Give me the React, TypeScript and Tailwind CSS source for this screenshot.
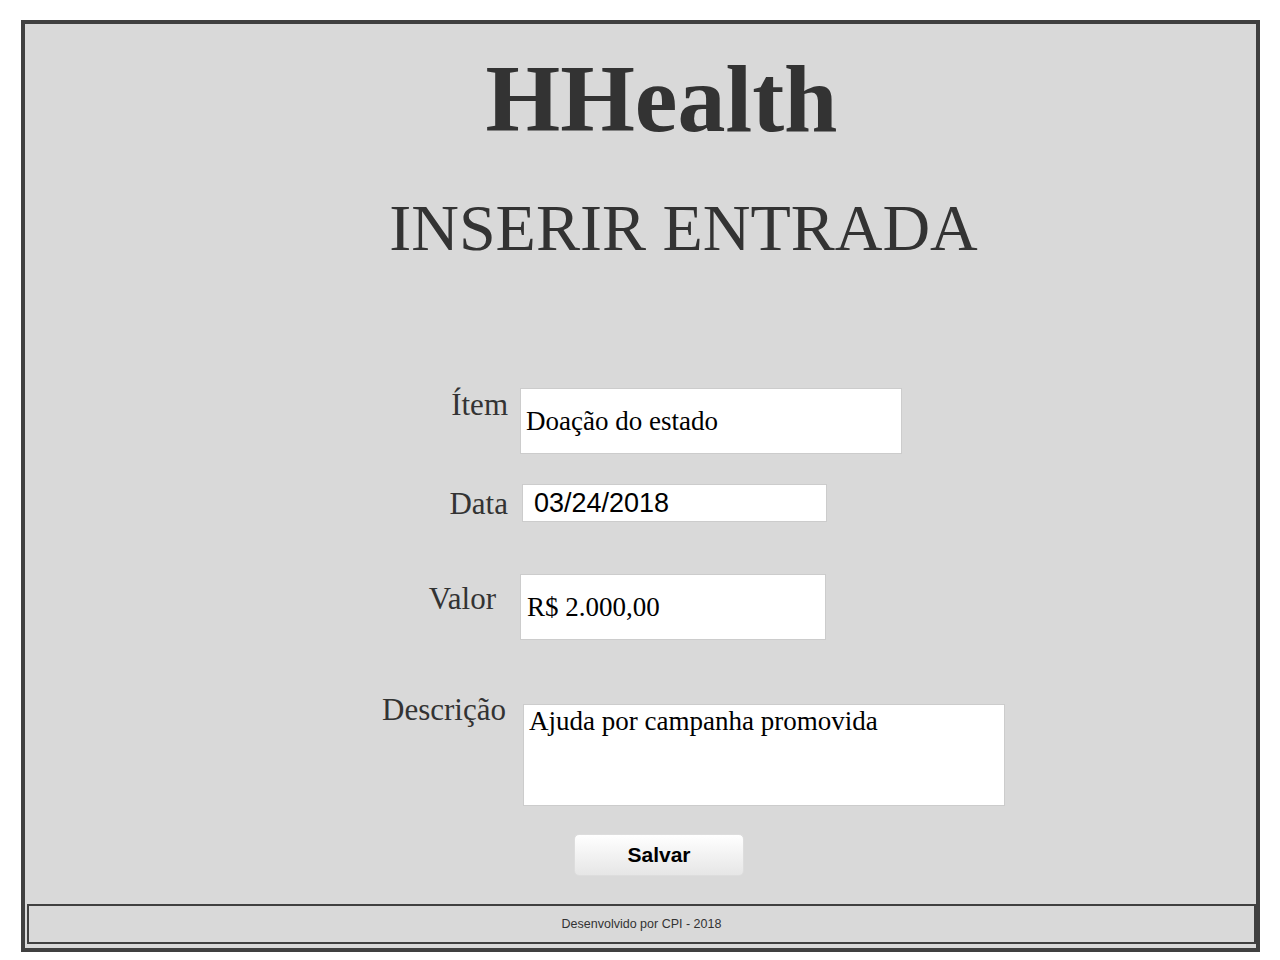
import { useState } from "react";

const serif = "font-['Liberation_Serif','Times_New_Roman',serif]";
const sans = "font-['Liberation_Sans',Arial,sans-serif]";

export default function App() {
  const [item, setItem] = useState("Doação do estado");
  const [data, setData] = useState("03/24/2018");
  const [valor, setValor] = useState("R$ 2.000,00");
  const [descricao, setDescricao] = useState("Ajuda por campanha promovida");

  return (
    <div className="min-h-screen bg-white pt-[20px] pl-[21px]">
      <div className="flex h-[932px] w-[1239px] flex-col border-4 border-[#404040] bg-[#d9d9d9]">
        {/* Header */}
        <h1 className={`${serif} mt-[27px] pl-[42px] text-center text-[96px] font-bold leading-none text-[#333333]`}>
          HHealth
        </h1>
        <h2 className={`${serif} mt-[48px] pl-[86px] text-center text-[66px] leading-none text-[#333333]`}>
          INSERIR ENTRADA
        </h2>

        {/* Form */}
        <div className="mt-[127px] flex items-start">
          <label className={`${serif} mt-[1px] w-[483px] text-right text-[31px] leading-none text-[#333333]`}>Ítem</label>
          <input
            value={item}
            onChange={(e) => setItem(e.target.value)}
            className={`${serif} ml-[12px] h-[66px] w-[382px] border border-[#cccccc] bg-white px-[5px] text-[27px] text-black outline-none`}
          />
        </div>

        <div className="mt-[30px] flex items-start">
          <label className={`${serif} mt-[4px] w-[483px] text-right text-[31px] leading-none text-[#333333]`}>Data</label>
          <input
            value={data}
            onChange={(e) => setData(e.target.value)}
            className={`${sans} ml-[14px] h-[38px] w-[305px] border border-[#cccccc] bg-white px-[11px] text-[27px] text-black outline-none`}
          />
        </div>

        <div className="mt-[52px] flex items-start">
          <label className={`${serif} mt-[9px] w-[483px] pr-[12px] text-right text-[31px] leading-none text-[#333333]`}>Valor</label>
          <input
            value={valor}
            onChange={(e) => setValor(e.target.value)}
            className={`${serif} ml-[12px] h-[66px] w-[306px] border border-[#cccccc] bg-white px-[6px] text-[27px] text-black outline-none`}
          />
        </div>

        <div className="mt-[52px] flex items-start">
          <label className={`${serif} mt-[2px] w-[483px] pr-[2px] text-right text-[31px] leading-none text-[#333333]`}>Descrição</label>
          <textarea
            value={descricao}
            onChange={(e) => setDescricao(e.target.value)}
            className={`${serif} ml-[15px] mt-[12px] h-[102px] w-[482px] resize-none border border-[#cccccc] bg-white px-[5px] pt-[1px] text-[27px] leading-[31px] text-black outline-none`}
          />
        </div>

        <button
          className={`${sans} ml-[549px] mt-[28px] h-[42px] w-[170px] rounded-[5px] border border-[#dddddd] bg-linear-to-b from-white to-[#e6e6e6] text-[21px] font-bold text-black`}
        >
          Salvar
        </button>

        {/* Footer */}
        <footer className="mb-[4px] ml-[2px] mt-auto flex h-[40px] items-center justify-center border-2 border-[#404040]">
          <span className={`${sans} text-[12.5px] text-[#333333]`}>Desenvolvido por CPI - 2018</span>
        </footer>
      </div>
    </div>
  );
}
